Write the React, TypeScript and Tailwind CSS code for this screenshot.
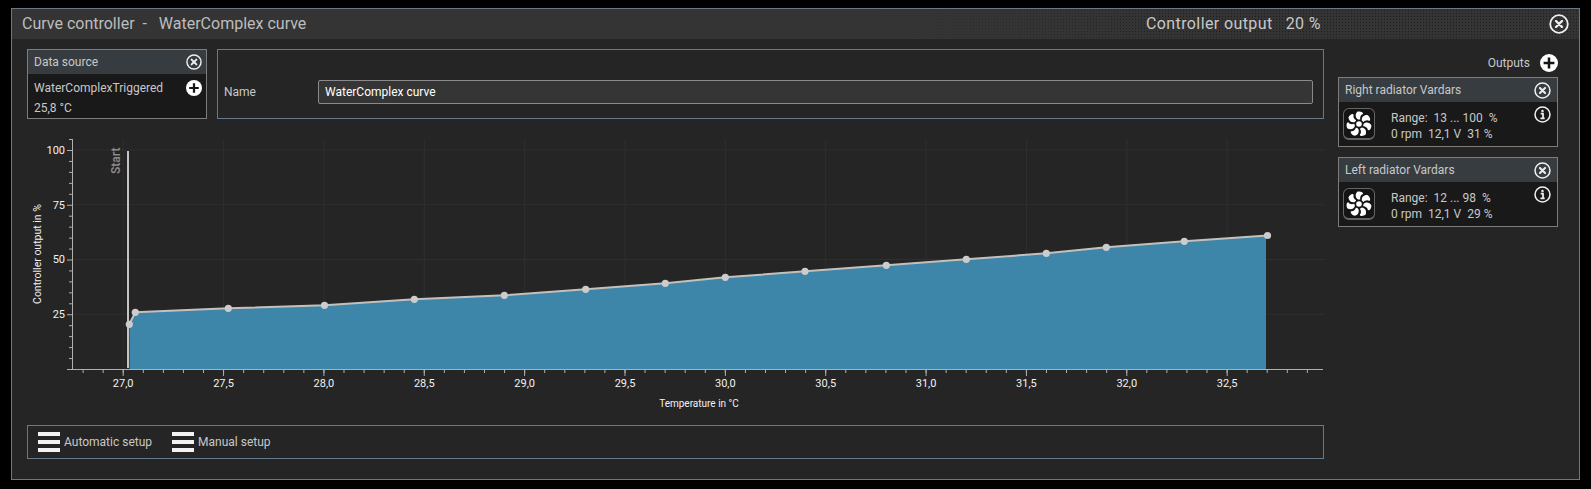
const font = "font-['Roboto',sans-serif]";

function CloseIcon({ size = 17 }: { size?: number }) {
  return (
    <svg width={size} height={size} viewBox="0 0 20 20" fill="none" className="shrink-0">
      <circle cx="10" cy="10" r="8.8" stroke="#eee" strokeWidth="1.8" />
      <path d="M7 7l6 6M13 7l-6 6" stroke="#eee" strokeWidth="2.4" strokeLinecap="round" />
    </svg>
  );
}

function PlusIcon({ size = 16 }: { size?: number }) {
  return (
    <svg width={size} height={size} viewBox="0 0 20 20" className="shrink-0">
      <circle cx="10" cy="10" r="10" fill="#fff" />
      <path d="M10 4v12M4 10h12" stroke="#151515" strokeWidth="2.8" />
    </svg>
  );
}

function InfoIcon() {
  return (
    <svg width="17" height="17" viewBox="0 0 20 20" fill="none" className="shrink-0">
      <circle cx="10" cy="10" r="8.8" stroke="#eee" strokeWidth="1.8" />
      <circle cx="10" cy="5.8" r="1.5" fill="#eee" />
      <path d="M7.8 9h2.8v5M7.6 14.6h5" stroke="#eee" strokeWidth="2.1" />
    </svg>
  );
}

function MenuIcon() {
  return (
    <svg width="22" height="20" viewBox="0 0 22 20" className="shrink-0">
      <rect width="22" height="4" fill="#f2f2f2" />
      <rect y="8" width="22" height="4" fill="#f2f2f2" />
      <rect y="16" width="22" height="4" fill="#f2f2f2" />
    </svg>
  );
}

function FanButton() {
  const blades = [0, 51.4, 102.8, 154.3, 205.7, 257.1, 308.6];
  return (
    <div className="flex h-8 w-8 items-center justify-center rounded-md border border-b-2 border-[#666] bg-[#141414]">
      <svg width="26" height="26" viewBox="-13 -13 26 26">
        {blades.map((a) => (
          <path
            key={a}
            transform={`rotate(${a})`}
            d="M-1 -4.4C-3.8 -6.2 -4.2 -9.8 -1.4 -12.4C1.6 -13 4.4 -11.8 4 -10C1.8 -9.4 0.8 -7 1.2 -4.6Z"
            fill="#fff"
          />
        ))}
        <circle r="2.8" fill="#fff" />
      </svg>
    </div>
  );
}

function OutputCard({ name, range, stats }: { name: string; range: string; stats: string }) {
  return (
    <div className="border border-[#7d7d7d] bg-[#191919]">
      <div className="flex h-6 items-center justify-between bg-[#373c41] pl-1.5 pr-1.5 text-xs text-[#c8c8c8]">
        <span>{name}</span>
        <CloseIcon />
      </div>
      <div className="flex h-11 items-start justify-between pl-1 pr-1.5 pt-1">
        <div className="mt-0.5 flex items-start gap-4">
          <FanButton />
          <div className="whitespace-pre pt-0.5 text-xs leading-4 text-[#c8c8c8]">
            <div>{range}</div>
            <div>{stats}</div>
          </div>
        </div>
        <InfoIcon />
      </div>
    </div>
  );
}

const points: [number, number][] = [
  [129.3, 324.3], [135.3, 312.3], [228.3, 308.3], [324.5, 305.3], [414.3, 299.3], [504.3, 295.3],
  [585.7, 289.3], [665.3, 283.3], [725.3, 277.3], [805, 271.3], [886.3, 265.3], [966.3, 259.3],
  [1046.3, 253.3], [1106.3, 247.3], [1184.3, 241.3], [1267.5, 235.5],
];
const xLabels = ["27,0", "27,5", "28,0", "28,5", "29,0", "29,5", "30,0", "30,5", "31,0", "31,5", "32,0", "32,5"];
const xMajor = (i: number) => 123.2 + i * 100.36;
const minorX = Array.from({ length: 62 }, (_, i) => 83.1 + i * 20.07).filter((x) => x < 1322);
const yFor = (p: number) => 369 - p * 2.19;

function Chart() {
  const line = points.map((p) => p.join(",")).join(" ");
  const area = `129.5,369 ${line} 1266,235.5 1266,369`;
  return (
    <svg width="1297" height="286" viewBox="27 129 1297 286" className="block">
      {xLabels.map((_, i) => (
        <line key={i} x1={xMajor(i)} x2={xMajor(i)} y1="139" y2="369" stroke="#2e2f34" />
      ))}
      {[100, 75, 50, 25].map((p) => (
        <line key={p} x1="72" x2="1324" y1={yFor(p)} y2={yFor(p)} stroke="#2e2f34" />
      ))}
      <polygon points={area} fill="#3d85a9" />
      <line x1="128" x2="128" y1="151" y2="368" stroke="#c4c4c4" strokeWidth="2" />
      <polyline points={line} fill="none" stroke="#c4c0bc" strokeWidth="2" />
      {points.map(([x, y]) => (
        <circle key={x} cx={x} cy={y} r="3.6" fill="#cccccc" />
      ))}
      <line x1="72.5" x2="72.5" y1="139" y2="369" stroke="#b0b0b0" />
      <line x1="72" x2="1323" y1="369.5" y2="369.5" stroke="#b0b0b0" />
      {Array.from({ length: 21 }, (_, i) => 369.5 - i * 10.95).map((y, i) => (
        <line key={i} x1={i % 5 === 0 ? 67 : 69} x2="72" y1={y} y2={y} stroke="#b0b0b0" />
      ))}
      <line x1="69" x2="72" y1="139.5" y2="139.5" stroke="#b0b0b0" />
      {minorX.map((x, i) => (
        <line key={i} x1={x} x2={x} y1="369" y2="373" stroke="#b0b0b0" />
      ))}
      {xLabels.map((_, i) => (
        <line key={i} x1={xMajor(i)} x2={xMajor(i)} y1="369" y2="376" stroke="#b0b0b0" />
      ))}
      <g fontSize="11" fill="#f2f2f2">
        {xLabels.map((t, i) => (
          <text key={t} x={xMajor(i)} y="387" textAnchor="middle">{t}</text>
        ))}
        {[[100, 154], [75, 209], [50, 263], [25, 318]].map(([v, y]) => (
          <text key={v} x="65" y={y} textAnchor="end">{v}</text>
        ))}
        <text x="699" y="407" textAnchor="middle" fontSize="10">Temperature in °C</text>
        <text transform="translate(41 254) rotate(-90)" textAnchor="middle" fontSize="10.5">Controller output in %</text>
      </g>
      <text transform="translate(120 174) rotate(-90)" fontSize="12" fontWeight="600" fill="#8a8a8a">Start</text>
    </svg>
  );
}

export default function App() {
  return (
    <div className={`h-[489px] bg-black pt-2 ${font}`}>
      <div className="mx-[11px] h-[472px] border border-[#66798a] bg-[#252525]">
        <div className="relative flex h-7.5 items-center bg-[#343434] pl-2.5 pr-2.5 text-base text-[#bdbdbd]">
          <div className="absolute inset-0 bg-[radial-gradient(#1e1e1e_1px,transparent_1px)] bg-[length:3px_3px] [mask-image:linear-gradient(to_right,transparent_55%,black_75%)]" />
          <span className="relative whitespace-pre">Curve controller  -   WaterComplex curve</span>
          <span className="relative ml-auto mr-56 whitespace-pre tracking-wide text-[#c8c8c8]">Controller output   20 %</span>
          <span className="relative pl-1"><CloseIcon size={20} /></span>
        </div>
        <div className="flex gap-3.5 pl-3.75 pt-2.5">
          <div className="flex w-[1297px] flex-col">
            <div className="flex h-[70px] gap-2.5">
              <div className="w-45 border border-[#7d7d7d] bg-[#191919] text-xs text-[#c8c8c8]">
                <div className="flex h-6 items-center justify-between bg-[#373c41] pl-1.5 pr-1">
                  <span>Data source</span>
                  <CloseIcon size={16} />
                </div>
                <div className="flex items-center justify-between pl-1.5 pr-1 pt-1.5">
                  <span>WaterComplexTriggered</span>
                  <PlusIcon />
                </div>
                <div className="mt-1 pl-1.5">25,8 °C</div>
              </div>
              <div className="flex flex-1 items-end gap-16 border border-[#66798a] pb-3.5 pl-1.5 pr-2.5 text-xs text-[#c8c8c8]">
                <span className="w-7.5 pb-1">Name</span>
                <div className="flex h-6 flex-1 items-center rounded-xs border border-[#8a8a8a] bg-[#353535] px-1.5 text-white">
                  WaterComplex curve
                </div>
              </div>
            </div>
            <div className="mt-2.5">
              <Chart />
            </div>
            <div className="mt-2.5 flex h-[34px] items-center gap-5 border border-[#66798a] pl-2.5 text-xs text-[#c8c8c8]">
              <div className="flex items-center gap-1"><MenuIcon /><span>Automatic setup</span></div>
              <div className="flex items-center gap-1"><MenuIcon /><span>Manual setup</span></div>
            </div>
          </div>
          <div className="flex w-[220px] flex-col">
            <div className="flex h-7 items-center justify-end gap-2.5 text-xs text-[#c8c8c8]">
              <span>Outputs</span>
              <PlusIcon size={18} />
            </div>
            <div className="flex flex-col gap-2.5">
              <OutputCard name="Right radiator Vardars" range="Range:  13 ... 100  %" stats="0 rpm  12,1 V  31 %" />
              <OutputCard name="Left radiator Vardars" range="Range:  12 ... 98  %" stats="0 rpm  12,1 V  29 %" />
            </div>
          </div>
        </div>
      </div>
    </div>
  );
}
